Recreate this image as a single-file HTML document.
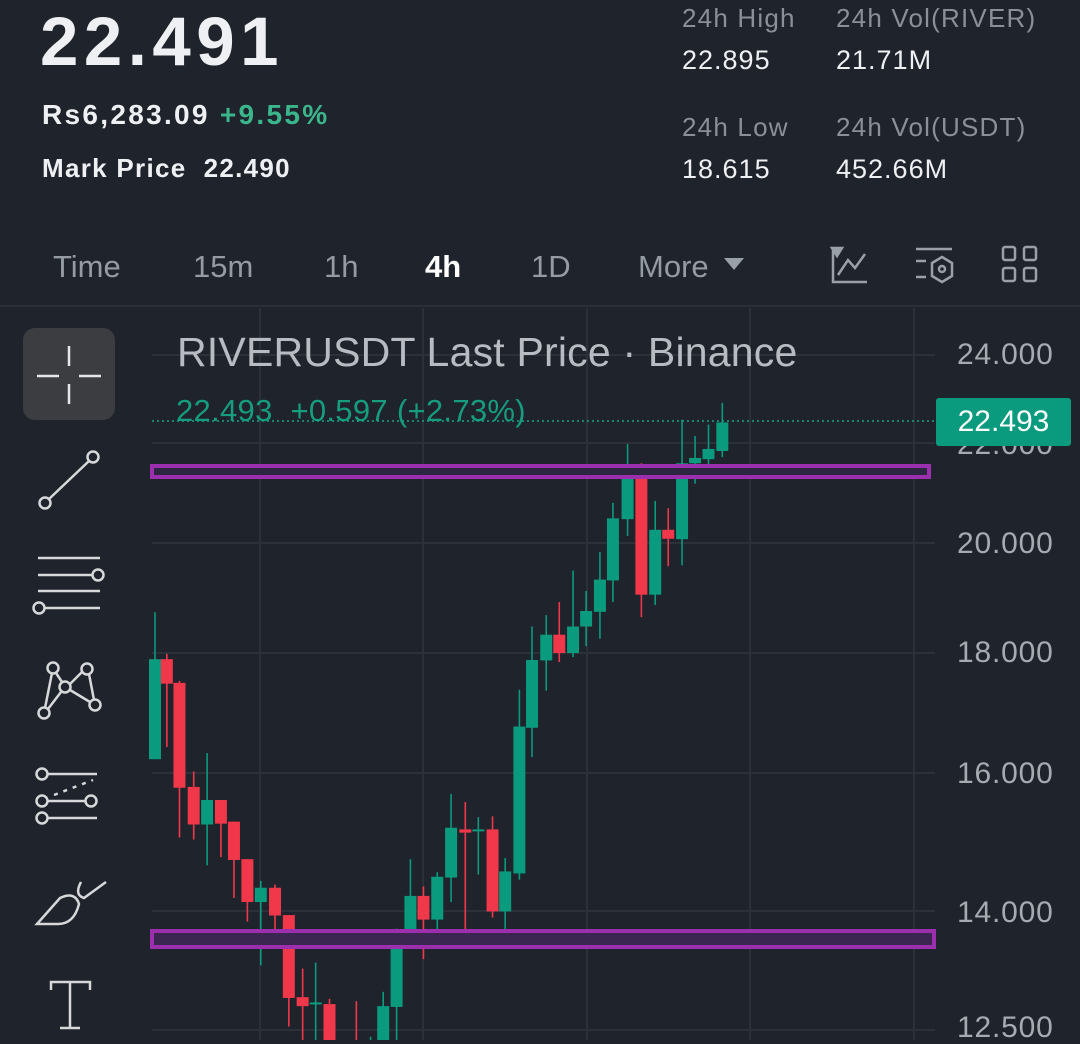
<!DOCTYPE html>
<html><head><meta charset="utf-8">
<style>
html,body{margin:0;padding:0;background:#1f232b;}
body{width:1080px;height:1040px;overflow:hidden;position:relative;font-family:"Liberation Sans",sans-serif;}
.t{position:absolute;white-space:nowrap;line-height:1;}
.ax{position:absolute;left:957px;font-size:30px;color:#a6abb2;letter-spacing:0.8px;line-height:1;}
.tab{position:absolute;top:251px;font-size:31px;color:#959ba3;line-height:1;}
</style></head><body>
<svg id="s" width="1080" height="1040" style="position:absolute;left:0;top:0" xmlns="http://www.w3.org/2000/svg">
<rect x="0" y="0" width="1080" height="1040" fill="#1f232b"/>
<line x1="0" y1="306" x2="1080" y2="306" stroke="#2a2f37" stroke-width="2"/>
<g id="grid" stroke="#2b3039" stroke-width="2"></g>
<g id="candles"></g>
<rect x="152" y="466" width="777" height="11" fill="#2d2640" stroke="#9b2fae" stroke-width="4"/>
<rect x="152" y="931" width="782" height="16" fill="#3a2650" stroke="#9b2fae" stroke-width="4"/>
<line x1="152" y1="421" x2="935" y2="421" stroke="#1aa386" stroke-width="1.5" stroke-dasharray="2 3"/>
<rect x="23" y="328" width="92" height="92" rx="12" fill="#3b3d40"/>
<g stroke="#e6e6e6" stroke-width="2.5" fill="none">
<line x1="69" y1="346" x2="69" y2="366"/><line x1="69" y1="384" x2="69" y2="404"/>
<line x1="37" y1="376" x2="59" y2="376"/><line x1="79" y1="376" x2="101" y2="376"/>
</g>
<g stroke="#d6d8da" stroke-width="2.5" fill="none">
<circle cx="45" cy="503" r="5.5"/><circle cx="93" cy="457" r="5.5"/><line x1="49" y1="499" x2="89" y2="461"/>
<line x1="38" y1="558" x2="100" y2="558"/><line x1="38" y1="575" x2="92" y2="575"/><circle cx="98" cy="575" r="5.5"/>
<line x1="38" y1="591" x2="100" y2="591"/><line x1="45" y1="608" x2="100" y2="608"/><circle cx="39" cy="608" r="5.5"/>
<circle cx="53" cy="668" r="5.5"/><circle cx="87" cy="669" r="5.5"/><circle cx="65" cy="687" r="5.5"/><circle cx="44" cy="713" r="5.5"/><circle cx="95" cy="705" r="5.5"/>
<line x1="52" y1="673" x2="45" y2="708"/><line x1="56" y1="673" x2="62" y2="682"/><line x1="70" y1="684" x2="82" y2="672"/><line x1="89" y1="674" x2="94" y2="700"/><line x1="70" y1="690" x2="90" y2="702"/><line x1="61" y1="692" x2="48" y2="709"/>
<circle cx="42" cy="774" r="5.5"/><line x1="48" y1="774" x2="97" y2="774"/>
<line x1="54" y1="795" x2="93" y2="780" stroke-dasharray="4 6"/>
<circle cx="42" cy="801" r="5.5"/><line x1="48" y1="801" x2="86" y2="801"/><circle cx="91" cy="801" r="5.5"/>
<circle cx="42" cy="818" r="5.5"/><line x1="48" y1="818" x2="97" y2="818"/>
<path d="M37 924 L60 898 Q75 891 79 904 Q74 924 58 924 Z"/>
<path d="M81 882 Q74 895 84 898 L106 882"/>
<path d="M51 990 L51 982 L90 982 L90 990 M70 982 L70 1028 M60 1028 L80 1028"/>
</g>
<g stroke="#9aa0a8" stroke-width="2.5" fill="none">
<path d="M833 248 L833 282 L867 282"/><path d="M838 275 L848 260 L855 268 L865 254"/>
<path d="M832 248 L842 248 L837 256 Z" fill="#9aa0a8"/>
<line x1="916" y1="249" x2="952" y2="249"/><line x1="916" y1="261" x2="926" y2="261"/><line x1="916" y1="277" x2="926" y2="277"/>
<path d="M942 257 L952 263 L952 276 L942 282 L932 276 L932 263 Z"/><circle cx="942" cy="269" r="3"/>
<rect x="1003" y="247" width="12" height="13" rx="2"/><rect x="1024" y="247" width="12" height="13" rx="2"/>
<rect x="1003" y="268" width="12" height="13" rx="2"/><rect x="1024" y="268" width="12" height="13" rx="2"/>
</g>
<path d="M724 258 L744 258 L734 270 Z" fill="#9aa0a8"/>
</svg>

<div class="t" style="left:40px;top:7px;font-size:69px;font-weight:bold;color:#eef0f3;letter-spacing:5.5px;">22.491</div>
<div class="t" style="left:42px;top:101px;font-size:28px;font-weight:bold;color:#eef0f3;letter-spacing:2.3px;">Rs6,283.09 <span style="color:#3bb58c">+9.55%</span></div>
<div class="t" style="left:42px;top:155px;font-size:26px;font-weight:bold;color:#eef0f3;letter-spacing:1.3px;">Mark Price&nbsp; 22.490</div>
<div class="t" style="left:682px;top:5px;font-size:26px;color:#8a9099;letter-spacing:1.2px;">24h High</div>
<div class="t" style="left:836px;top:5px;font-size:26px;color:#8a9099;letter-spacing:1.2px;">24h Vol(RIVER)</div>
<div class="t" style="left:682px;top:47px;font-size:27px;color:#eef0f3;letter-spacing:1px;">22.895</div>
<div class="t" style="left:836px;top:47px;font-size:27px;color:#eef0f3;letter-spacing:1px;">21.71M</div>
<div class="t" style="left:682px;top:114px;font-size:26px;color:#8a9099;letter-spacing:1.2px;">24h Low</div>
<div class="t" style="left:836px;top:114px;font-size:26px;color:#8a9099;letter-spacing:1.2px;">24h Vol(USDT)</div>
<div class="t" style="left:682px;top:156px;font-size:27px;color:#eef0f3;letter-spacing:1px;">18.615</div>
<div class="t" style="left:836px;top:156px;font-size:27px;color:#eef0f3;letter-spacing:1px;">452.66M</div>

<div class="tab" style="left:53px;">Time</div>
<div class="tab" style="left:193px;">15m</div>
<div class="tab" style="left:324px;">1h</div>
<div class="tab" style="left:425px;color:#fff;font-weight:bold;">4h</div>
<div class="tab" style="left:531px;">1D</div>
<div class="tab" style="left:638px;">More</div>

<div class="t" style="left:177px;top:332px;font-size:41px;color:#b8bcc2;letter-spacing:0.2px;">RIVERUSDT Last Price · Binance</div>
<div class="t" style="left:176px;top:395px;font-size:31px;color:#169c7e;letter-spacing:0.3px;">22.493&nbsp; +0.597 (+2.73%)</div>

<div class="ax" style="top:340px;">24.000</div>
<div class="ax" style="top:430px;">22.000</div>
<div class="ax" style="top:529px;">20.000</div>
<div class="ax" style="top:638px;">18.000</div>
<div class="ax" style="top:759px;">16.000</div>
<div class="ax" style="top:898px;">14.000</div>
<div class="ax" style="top:1013px;">12.500</div>

<div class="t" style="left:936px;top:398px;width:135px;height:48px;background:#0a9a7e;border-radius:3px;color:#fff;font-size:30px;text-align:center;line-height:48px;">22.493</div>

<script>
var NS="http://www.w3.org/2000/svg";
function el(p,n,a){var e=document.createElementNS(NS,n);for(var k in a)e.setAttribute(k,a[k]);p.appendChild(e);return e;}
var g=document.getElementById("grid");
[260,423,587,750,914].forEach(function(x){el(g,"line",{x1:x,y1:308,x2:x,y2:1040});});
[355,443,543,653,773,911,1030].forEach(function(y){el(g,"line",{x1:152,y1:y,x2:935,y2:y});});
var C=[[38,520,880,635,880,1],[68,622,850,635,695,0],[100,688,1072,693,950,0],[136,910,1077,948,1040,0],[170,865,1140,980,1040,1],[205,980,1120,980,1038,0],[238,1033,1220,1033,1127,0],[272,1125,1278,1125,1230,0],[306,1178,1385,1195,1230,1],[342,1187,1320,1195,1263,0],[377,1262,1535,1262,1465,0],[412,1393,1700,1463,1485,0],[445,1378,1700,1476,1480,1],[480,1467,1700,1480,1700,0],[548,1473,1700,1700,1700,0],[584,1560,1700,1600,1700,1],[616,1450,1700,1485,1700,1],[650,1295,1700,1330,1487,1],[685,1125,1333,1215,1333,1],[718,1192,1370,1215,1273,0],[753,1157,1297,1168,1273,1],[788,965,1230,1048,1170,1],[824,985,1297,1052,1060,0],[857,1022,1163,1052,1056,1],[893,1020,1268,1052,1253,0],[925,1122,1307,1155,1253,1],[961,710,1175,800,1160,1],[993,555,875,637,803,1],[1029,527,712,575,638,1],[1062,495,642,575,620,0],[1097,418,630,555,620,1],[1130,468,603,517,555,1],[1165,372,585,440,519,1],[1198,252,495,290,442,1],[1235,108,333,168,292,1],[1270,155,532,168,477,0],[1305,247,502,318,477,1],[1338,265,407,318,340,0],[1373,48,405,155,341,1],[1406,88,205,142,155,1],[1440,60,165,120,145,1],[1475,7,140,55,125,1]];
var cg=document.getElementById("candles");
C.forEach(function(c){
 var x=140+c[0]/2.533, col=c[5]?"#0a9a7e":"#f0384a";
 var y=function(v){return 400+v/2.45;};
 el(cg,"line",{x1:x,y1:y(c[1]),x2:x,y2:y(c[2]),stroke:col,"stroke-width":1.6});
 var h=Math.max(2,y(c[4])-y(c[3]));
 el(cg,"rect",{x:x-6,y:y(c[3]),width:12,height:h,fill:col});
});
</script>
</body></html>
